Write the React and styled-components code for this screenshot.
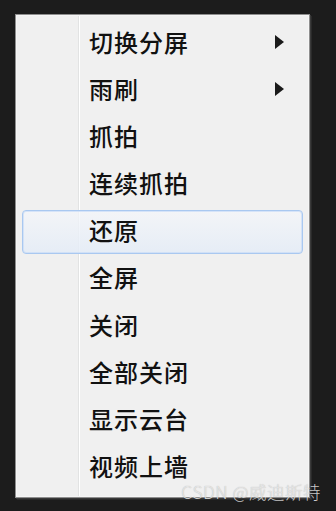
import React from "react";
import styled, { createGlobalStyle } from "styled-components";

const Global = createGlobalStyle`
  html, body { margin: 0; padding: 0; background: #1c1c1c; }
  #root { width: 336px; height: 511px; }
`;

const Stage = styled.div`
  position: relative;
  width: 336px;
  height: 511px;
  background: #1c1c1c;
  padding: 14px 0 0 15px;
  box-sizing: border-box;
`;

const Menu = styled.div`
  width: 295px;
  height: 484px;
  box-sizing: border-box;
  border: 1px solid #8e8e8e;
  box-shadow: 1px 1px 0 #3a3a3a, 2px 2px 0 #2a2a2a;
  background: #f5f5f5;
  padding: 1px;
`;

const Panel = styled.div`
  height: 100%;
  box-sizing: border-box;
  background:
    linear-gradient(to right,
      transparent 0, transparent 61px,
      #e2e3e3 61px, #e2e3e3 62px,
      #ffffff 62px, #ffffff 63px,
      transparent 63px);
  background-color: #f0f0f0;
  padding: 5.5px 5px 0 5px;
  display: flex;
  flex-direction: column;
  gap: 3.2px;
`;

const Item = styled.div`
  position: relative;
  height: 44px;
  box-sizing: border-box;
  display: flex;
  align-items: center;
  padding-left: 66px;
  padding-bottom: 5px;
  border-radius: 4px;
  border: 1px solid ${(p) => (p.$active ? "#a9c8f0" : "transparent")};
  box-shadow: ${(p) => (p.$active ? "inset 0 0 0 1px rgba(200,220,248,0.7)" : "none")};
  background: ${(p) =>
    p.$active
      ? "linear-gradient(to bottom, rgba(244,246,250,0.75), rgba(228,236,247,0.85))"
      : "transparent"};
  font-family: "Noto Sans CJK SC", "Microsoft YaHei", sans-serif;
  font-size: 24px;
  font-weight: 500;
  letter-spacing: 1px;
  color: #111;
`;

const Arrow = styled.span`
  position: absolute;
  right: 18px;
  top: 50%;
  margin-top: -9px;
  width: 0;
  height: 0;
  border-top: 7.5px solid transparent;
  border-bottom: 7.5px solid transparent;
  border-left: 9px solid #1a1a1a;
`;

const Watermark = styled.div`
  position: absolute;
  right: 15px;
  bottom: 7px;
  font-family: "Noto Sans CJK SC", "Liberation Sans", sans-serif;
  font-size: 17.5px;
  font-weight: 300;
  letter-spacing: 0.5px;
  color: rgba(238, 238, 238, 0.85);
  text-shadow: 0 0 1px rgba(0,0,0,0.3);
  white-space: nowrap;
`;

const items = [
  { label: "切换分屏", sub: true },
  { label: "雨刷", sub: true },
  { label: "抓拍" },
  { label: "连续抓拍" },
  { label: "还原", active: true },
  { label: "全屏" },
  { label: "关闭" },
  { label: "全部关闭" },
  { label: "显示云台" },
  { label: "视频上墙" },
];

export default function App() {
  return (
    <>
      <Global />
      <Stage>
        <Menu>
          <Panel>
            {items.map((it) => (
              <Item key={it.label} $active={it.active}>
                {it.label}
                {it.sub && <Arrow />}
              </Item>
            ))}
          </Panel>
        </Menu>
        <Watermark>CSDN @威迪斯特</Watermark>
      </Stage>
    </>
  );
}
